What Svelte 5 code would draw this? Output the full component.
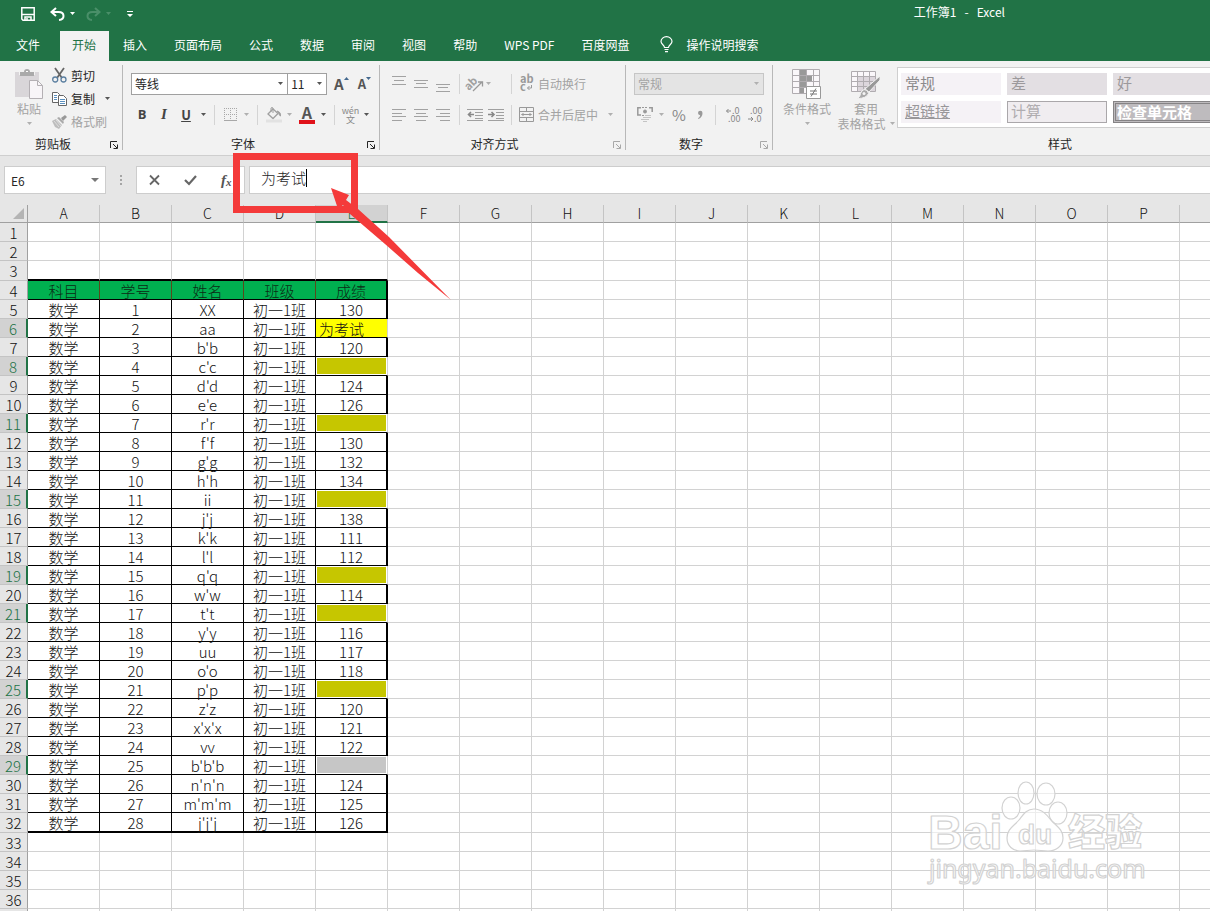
<script>
  const tabs = ['开始', '插入', '页面布局', '公式', '数据', '审阅', '视图', '帮助', 'WPS PDF', '百度网盘'];
  const columns = 'ABCDEFGHIJKLMNOPQ'.split('');
  const headings = ['科目', '学号', '姓名', '班级', '成绩'];
  const names = [
    'XX', 'aa', "b'b", "c'c", "d'd", "e'e", "r'r", "f'f", "g'g", "h'h", 'ii', "j'j", "k'k", "l'l",
    "q'q", "w'w", "t't", "y'y", 'uu', "o'o", "p'p", "z'z", "x'x'x", 'vv', "b'b'b", "n'n'n", "m'm'm", "j'j'j"
  ];
  const scores = [
    '130', '为考试', '120', '', '124', '126', '', '130', '132', '134', '', '138', '111', '112',
    '', '114', '', '116', '117', '118', '', '120', '121', '122', '', '124', '125', '126'
  ];
  const selected = new Set([6, 8, 11, 15, 19, 21, 25, 29]);
  const rows = Array.from({ length: 37 }, (_, i) => i + 1);

  function cellsOf(row) {
    if (row === 4) return headings;
    if (row < 5 || row > 32) return [];
    const i = row - 5;
    return ['数学', String(i + 1), names[i], '初一1班', scores[i]];
  }

  let formula = $state('为考试');
</script>

{#snippet caret(tone)}
  <svg class="caret {tone}" width="5" height="3" viewBox="0 0 5 3" aria-hidden="true"><path d="M0 0h5L2.500 3z" fill="currentColor" /></svg>
{/snippet}

{#snippet lines(ys, kind)}
  <svg width="14" height="16" viewBox="0 0 14 16" aria-hidden="true">
    {#each ys as y, i}
      {@const short = i % 2 === 1}
      {@const x = !short || kind === 'left' ? 0 : kind === 'right' ? 4 : 2}
      <path d="M{x} {y + 0.5}h{short ? 10 : 14}" stroke="#a2a2a2" />
    {/each}
  </svg>
{/snippet}

{#snippet launcher(tone)}
  <button class="launcher {tone}" aria-label="更多选项">
    <svg width="8" height="8" viewBox="0 0 8 8" fill="none" stroke="currentColor"><path d="M.5 7V.5H7M3 3l4 4M7.500 3.500v4h-4" /></svg>
  </button>
{/snippet}

<div class="app">
  <header class="top">
    <div class="title-bar">
      <button class="save" aria-label="保存">
        <svg width="14" height="14" viewBox="0 0 14 14" fill="none" stroke="#fff" stroke-width="1.500"><path d="M.8.8h12.400v12.400H2L.8 12z" /><path d="M1 7.500h12" /><path d="M4 13v-3h6v3" /><path d="M6 11v2" /></svg>
      </button>
      <button aria-label="撤消">
        <svg width="15" height="14" viewBox="0 0 15 14" fill="none" stroke="#fff" stroke-width="2"><path d="M6 1L1.500 5 6 9M2 5h6.500c3 0 5 1.500 5 4s-2 3.800-4.500 4" /></svg>
      </button>
      {@render caret('white')}
      <button class="redo" aria-label="恢复">
        <svg width="15" height="14" viewBox="0 0 15 14" fill="none" stroke="#4a8f69" stroke-width="2"><path d="M9 1l4.500 4L9 9M13 5H6.500c-3 0-5 1.500-5 4s2 3.800 4.500 4" /></svg>
      </button>
      {@render caret('faint')}
      <button class="customize" aria-label="自定义快速访问工具栏">
        <svg width="6" height="6" viewBox="0 0 6 6"><path d="M0 0h6v1H0zM0 3h6L3 6z" fill="#fff" /></svg>
      </button>
      <span class="doc">工作簿1&nbsp;&nbsp; -&nbsp;&nbsp; Excel</span>
    </div>
    <nav class="tabs">
      <button class="file">文件</button>
      {#each tabs as tab, i}
        <button class:active={i === 0}>{tab}</button>
      {/each}
      <button class="tell">
        <svg width="13" height="17" viewBox="0 0 13 17" fill="none" stroke="#fff" stroke-width="1.200"><path d="M4.500 11.500C4.500 9 1 8.500 1 5.500a5.500 4.800 0 0 1 11 0c0 3-3.500 3.500-3.500 6zM4.500 13.500h4M5 15.700h3" /></svg>
        操作说明搜索
      </button>
    </nav>
  </header>

  <section class="ribbon">
    <div class="group clipboard">
      <div class="body">
        <button class="big off paste">
          <svg width="28" height="30" viewBox="0 0 28 30"><path d="M0 3h4v3h16V3h4v25H0z" fill="#d9d6d9" /><path d="M5 3h4q0-3 3-3t3 3h4v4H5z" fill="#aaa" /><path d="M11 2.500h2" stroke="#fff" /><path d="M14.500 11.500h8l5 5v13h-13z" fill="#f8f5f8" stroke="#b4b0b4" /><path d="M22.500 11.500v5h5" fill="none" stroke="#b4b0b4" /></svg>
          <span>粘贴</span>
          {@render caret('off')}
        </button>
        <div class="stack">
          <button>
            <svg width="15" height="15" viewBox="0 0 15 15" fill="none"><path d="M3 0l7 10M12 0L5 10" stroke="#666" stroke-width="1.800" /><circle cx="3.200" cy="11.500" r="2.500" stroke="#5b7fa0" stroke-width="1.300" /><circle cx="11.500" cy="11.500" r="2.500" stroke="#5b7fa0" stroke-width="1.300" /></svg>
            剪切
          </button>
          <button>
            <svg width="15" height="14" viewBox="0 0 15 14" fill="#fff" stroke="#666"><path d="M.5.5h5l2 2v8h-7z" /><path d="M6.500 3.500h5l3 3v7h-8z" /><path d="M2 3.500h3M2 5.500h3M2 7.500h3M8 7.500h5M8 9.500h5M8 11.500h5" stroke="#5b8fbe" /></svg>
            复制
            {@render caret('dark')}
          </button>
          <button class="off">
            <svg width="15" height="14" viewBox="0 0 15 14"><path d="M9 3l4-3 2 2-4 4z" fill="#999" /><path d="M5 3l2-1 5 5-1 2z" fill="#aaa" /><path d="M0 6l4-2 6 6-3 4-2-1-2-1z" fill="#bdbdbd" /><path d="M2 6l5 6M4 5l5 6" stroke="#ddd" /></svg>
            格式刷
          </button>
        </div>
      </div>
      <div class="foot"><span>剪贴板</span>{@render launcher('dark')}</div>
    </div>
    <div class="vr"></div>

    <div class="group font">
      <div class="body two-rows">
        <div class="font-top">
          <label class="pick family"><select aria-label="字体"><option>等线</option></select>{@render caret('dark')}</label>
          <label class="pick size"><select aria-label="字号"><option>11</option></select>{@render caret('dark')}</label>
          <button class="grow" aria-label="增大字号"><b>A</b><svg width="5" height="3" viewBox="0 0 5 3"><path d="M0 3h5L2.500 0z" fill="#44688e" /></svg></button>
          <button class="shrink" aria-label="减小字号"><b>A</b><svg width="5" height="3" viewBox="0 0 5 3"><path d="M0 0h5L2.500 3z" fill="#44688e" /></svg></button>
        </div>
        <div class="font-bottom">
          <button class="glyph"><b>B</b></button>
          <button class="glyph"><i>I</i></button>
          <button class="glyph"><u>U</u></button>
          {@render caret('dark')}
          <span class="sep"></span>
          <button aria-label="边框"><svg width="13" height="13" viewBox="0 0 13 13" fill="none" stroke="#a8a8a8"><path d="M.5 0v12M6.500 0v12M12.500 0v12M0 .5h13M0 6.500h13" stroke-dasharray="1 1" /><path d="M0 12.500h13" /></svg></button>
          {@render caret('off')}
          <span class="sep"></span>
          <button aria-label="填充颜色"><svg width="16" height="16" viewBox="0 0 16 16" fill="none" stroke="#a0a0a0"><path d="M2 7l5-5 5 4.500-5 5z" stroke-width="1.300" /><path d="M5 5V1q1-1 2 0v5" /><path d="M11 4q4 1 3.500 5-2-1-1.500-3z" fill="#a0a0a0" /><path d="M0 12.500h16v3H0z" fill="#e2e2e2" stroke="none" /></svg></button>
          {@render caret('off')}
          <button class="color" aria-label="字体颜色"><b>A</b><span></span></button>
          {@render caret('dark')}
          <span class="sep"></span>
          <button class="pinyin"><span>wén</span><span>文</span></button>
          {@render caret('dark')}
        </div>
      </div>
      <div class="foot"><span>字体</span>{@render launcher('dark')}</div>
    </div>
    <div class="vr"></div>

    <div class="group align">
      <div class="body two-rows">
        <div class="align-row">
          <button aria-label="顶端对齐">{@render lines([0, 4, 8], 'center')}</button>
          <button aria-label="垂直居中">{@render lines([4, 7, 11], 'center')}</button>
          <button aria-label="底端对齐">{@render lines([8, 11, 15], 'center')}</button>
          <span class="sep"></span>
          <button aria-label="方向"><svg width="17" height="16" viewBox="0 0 17 16"><text x="-2" y="10" font-size="11" font-weight="700" fill="#a0a0a0" transform="rotate(-45 6 8)">ab</text><path d="M6 15l9-9M11 6h4.500v4.500" fill="none" stroke="#999" stroke-width="1.300" /></svg></button>
          <span class="start">{@render caret('off')}</span>
          <span class="sep"></span>
          <button class="off wide">
            <svg width="15" height="17" viewBox="0 0 15 17"><text x="1" y="8" font-size="11" font-weight="700" fill="#999">ab</text><text x="1" y="16" font-size="11" font-weight="700" fill="#999">c</text><path d="M12.500 10v3H8.500M10.500 11l-2 2 2 2" fill="none" stroke="#999" /></svg>
            自动换行
          </button>
        </div>
        <div class="align-row">
          <button aria-label="左对齐">{@render lines([2, 6, 9, 13], 'left')}</button>
          <button aria-label="居中">{@render lines([2, 6, 9, 13], 'center')}</button>
          <button aria-label="右对齐">{@render lines([2, 6, 9, 13], 'right')}</button>
          <span class="sep"></span>
          <button aria-label="减少缩进量"><svg width="16" height="14" viewBox="0 0 16 14" fill="none" stroke="#a0a0a0"><path d="M0 1.500h16M8 4.500h8M8 7.500h8M0 12.500h16M8 10.500h8" /><path d="M7 6.500H1.500M4 4L1.500 6.500 4 9" stroke-width="1.600" stroke="#888" /></svg></button>
          <button aria-label="增加缩进量"><svg width="16" height="14" viewBox="0 0 16 14" fill="none" stroke="#a0a0a0"><path d="M0 1.500h16M8 4.500h8M8 7.500h8M0 12.500h16M8 10.500h8" /><path d="M0 6.500h5.500M3.500 4L6 6.500 3.500 9" stroke-width="1.600" stroke="#888" /></svg></button>
          <span class="sep"></span>
          <button class="off wide">
            <svg width="15" height="15" viewBox="0 0 15 15" fill="none" stroke="#999"><path d="M.5.5h14v14H.5zM.5 4.500h14M.5 10.500h14M7.500.5v4M7.500 10.500v4M2.500 7.500h10M4.500 6L3 7.500 4.500 9M10.500 6L12 7.500 10.500 9" /></svg>
            合并后居中
            {@render caret('off')}
          </button>
        </div>
      </div>
      <div class="foot"><span>对齐方式</span>{@render launcher('off')}</div>
    </div>
    <div class="vr"></div>

    <div class="group number">
      <div class="body two-rows">
        <div class="number-top">
          <label class="pick format"><select aria-label="数字格式" disabled><option>常规</option></select>{@render caret('off')}</label>
        </div>
        <div class="number-bottom">
          <button aria-label="会计数字格式"><svg width="16" height="15" viewBox="0 0 16 15" fill="none" stroke="#999"><path d="M4 .8H.8V8H4M12 .8h3.200V5" stroke-width="1.500" /><path d="M5 .5h6M5 8.500h2" stroke-dasharray="2 1" /><circle cx="8" cy="4.500" r="1.500" fill="#999" /><path d="M8 8.500h6M6 10.500h8M4 12.500h8M6 14.500h4" stroke="#c4c4c4" /></svg></button>
          {@render caret('off')}
          <button class="percent">%</button>
          <button aria-label="千位分隔样式"><svg width="5" height="8" viewBox="0 0 5 8"><path d="M0 2a2 2 0 0 1 4.500 0q0 4-4 6l-.5-.8Q2 6 2.200 4.200 0 4 0 2z" fill="#999" /></svg></button>
          <span class="sep"></span>
          <button aria-label="增加小数位数"><svg width="16" height="16" viewBox="0 0 16 16"><text x="7" y="7" font-size="9" fill="#888">.0</text><text x="3" y="15" font-size="9" fill="#888">.00</text><path d="M6 4H1.500M3.500 2l-2 2 2 2" fill="none" stroke="#888" /></svg></button>
          <button aria-label="减少小数位数"><svg width="16" height="16" viewBox="0 0 16 16"><text x="3" y="7" font-size="9" fill="#888">.00</text><text x="7" y="15" font-size="9" fill="#888">.0</text><path d="M1 12h5M4 10l2 2-2 2" fill="none" stroke="#888" /></svg></button>
        </div>
      </div>
      <div class="foot"><span>数字</span>{@render launcher('off')}</div>
    </div>
    <div class="vr"></div>

    <div class="group styles">
      <div class="body">
        <button class="big off cond">
          <svg width="30" height="30" viewBox="0 0 30 30" fill="none"><path d="M.5.500h27v24H.5z" fill="#faf7fa" /><path d="M8 0h7v6h5v6h-5v6h-3v6H8z" fill="#999" /><path d="M.5.500h27v24H.5zM.5 6.500h27M.5 12.500h27M.5 18.500h27M7.500.5v24M14.500.5v24M21.500.5v24" stroke="#b0acb0" /><path d="M14.500 17.500h14v12h-14z" fill="#fff" stroke="#999" /><path d="M18 22h7M18 25h7M24 19.500l-5 8" stroke="#777" /></svg>
          <span>条件格式</span>
          {@render caret('off')}
        </button>
        <button class="big off table-style">
          <svg width="30" height="30" viewBox="0 0 30 30" fill="none"><path d="M.5 2.500h24v20H.5z" fill="#faf7fa" /><path d="M7 8h18v14H7z" fill="#dcd6dc" /><path d="M.5 2.500h24v20H.5zM.5 7.500h24M.5 12.500h24M.5 17.500h24M6.500 2.500v20M12.500 2.500v20M18.500 2.500v20" stroke="#b0acb0" /><path d="M29 7v4L18 23l-4-3z" fill="#999" stroke="#f2f2f2" /><path d="M13 20.500q4 0 4.500 4-2 5-11 5 3-2 3-5 1-3 3.500-4z" fill="#aaa" stroke="#f2f2f2" /><circle cx="13" cy="24.500" r="1.500" fill="#f4f4f4" /></svg>
          <span>套用</span>
          <span class="with-caret">表格格式{@render caret('off')}</span>
        </button>
        <div class="gallery">
          <button class="sw">常规</button>
          <button class="sw bad">差</button>
          <button class="sw bad good">好</button>
          <button class="sw link">超链接</button>
          <button class="sw calc">计算</button>
          <button class="sw check">检查单元格</button>
        </div>
      </div>
      <div class="foot"><span>样式</span></div>
    </div>
  </section>

  <section class="formula-bar">
    <label class="name-box"><input aria-label="名称框" value="E6" /><svg width="8" height="4" viewBox="0 0 8 4"><path d="M0 0h8L4 4z" fill="#777" /></svg></label>
    <svg class="dots" width="2" height="10" viewBox="0 0 2 10"><path d="M0 0h2v2H0zM0 4h2v2H0zM0 8h2v2H0z" fill="#a5a5a5" /></svg>
    <div class="entry">
      <button aria-label="取消"><svg width="11" height="10" viewBox="0 0 11 10"><path d="M1 .5l9 9M10 .5l-9 9" stroke="#666" stroke-width="1.800" /></svg></button>
      <button aria-label="输入"><svg width="13" height="10" viewBox="0 0 13 10"><path d="M1 5l4 4 7-8" fill="none" stroke="#666" stroke-width="2.200" /></svg></button>
      <button class="fx" aria-label="插入函数">f<sub>x</sub></button>
    </div>
    <label class="formula"><input aria-label="编辑栏" bind:value={formula} /><span class="cursor"></span></label>
  </section>

  <main class="sheet">
    <table>
      <thead>
        <tr>
          <th class="corner"><svg width="11" height="11" viewBox="0 0 11 11"><path d="M11 0v11H0z" fill="#b4b4b4" /></svg></th>
          {#each columns as letter}
            <th class:picked={letter === 'E'}>{letter}</th>
          {/each}
        </tr>
      </thead>
      <tbody>
        {#each rows as row}
          {@const cells = cellsOf(row)}
          <tr
            class:before={row === 3}
            class:head={row === 4}
            class:data={row > 4 && row < 33}
            class:last={row === 32}
          >
            <th class:picked={selected.has(row)}>{row}</th>
            {#each columns as letter, i}
              <td
                class:used={i < 5}
                class:edge={i === 4}
                class:editing={i === 4 && row === 6}
                class:chosen={i === 4 && row > 6 && selected.has(row)}
                class:active={i === 4 && row === 29}>{cells[i] ?? ''}</td>
            {/each}
          </tr>
        {/each}
      </tbody>
    </table>
  </main>

  <svg class="callout" width="224" height="150" viewBox="0 0 224 150" aria-hidden="true">
    <path d="M6.500 3.500h118v53H6.500z" fill="none" stroke="#f43a3a" stroke-width="7" />
    <path d="M101 35l18 7-3 5 12 9 31 28 62 63-33-27-33-29-35-30-7-9-5 4z" fill="#f43a3a" />
  </svg>

  <svg class="watermark" width="240" height="115" viewBox="0 0 240 115">
    <g fill="#fff" fill-opacity=".6" stroke="#d2d2d2" stroke-width="1.200" stroke-linejoin="round">
      <ellipse cx="91" cy="33" rx="9" ry="11" />
      <ellipse cx="106" cy="18" rx="8" ry="11" />
      <ellipse cx="126" cy="19" rx="9" ry="11" />
      <ellipse cx="138" cy="38" rx="9" ry="11" />
      <path d="M114 34c-8 0-11 6-15 11-5 6-12 9-12 18 0 8 6 13 13 13 5 0 9-1 14-1s9 1 14 1c8 0 15-5 15-13 0-9-7-12-12-18-4-5-9-11-17-11z" />
      <text x="8" y="74" font-size="48" font-weight="700">Bai</text>
      <text x="98" y="69" font-size="28" font-weight="700">du</text>
      <text class="cn" x="148" y="71" font-size="37" font-weight="900">经验</text>
      <text class="site" x="9" y="103" font-size="25">jingyan.baidu.com</text>
    </g>
  </svg>
</div>

<style>
  :global(body) { overflow: hidden; }
  .app {
    position: relative;
    display: flex;
    flex-direction: column;
    height: 100vh;
    overflow: hidden;
    background: #fff;
    color: #262626;
    font: 12px/15px "Noto Sans CJK SC", sans-serif;
  }
  button, select, input { font: inherit; color: inherit; background: none; border: 0; padding: 0; margin: 0; }
  button { display: flex; align-items: center; justify-content: center; white-space: nowrap; }
  input { min-width: 0; outline: 0; }
  svg { display: block; flex: none; overflow: visible; }
  .caret.dark { color: #555; }
  .caret.off { color: #b0b0b0; }
  .caret.white { color: #fff; }
  .caret.faint { color: #4a8f69; }

  .top { background: #217346; color: #fff; }
  .title-bar { display: flex; align-items: center; height: 27px; padding: 0 205px 4px 21px; }
  .save { margin-right: 15px; }
  .title-bar .caret { margin-left: 5px; }
  .redo { margin-left: 11px; }
  .customize { margin-left: 16px; }
  .doc { margin-left: auto; padding-bottom: 5px; }
  .tabs { display: flex; height: 30px; }
  .tabs button { padding: 0 13px 4px 14px; }
  .tabs .file { padding: 0 20px 4px 16px; }
  .tabs .active { background: #f2f2f2; color: #217346; padding: 0 13px 4px 12px; }
  .tabs .tell { gap: 13px; padding: 0 14px 3px 18px; }

  .ribbon { display: flex; height: 94px; background: #f2f2f2; border-bottom: 1px solid #cfcfcf; overflow: hidden; }
  .group { display: flex; flex-direction: column; flex: none; }
  .vr { flex: none; width: 1px; margin: 4px 0 5px; background: #b8b8b8; }
  .sep { width: 1px; height: 20px; background: #d4d4d4; }
  .body { display: flex; height: 72px; }
  .foot { display: grid; grid-template-columns: 1fr auto; align-items: center; height: 20px; text-align: center; }
  .launcher { width: 16px; height: 16px; margin-top: 4px; }
  .launcher.off { color: #a8a8a8; }
  .off { color: #a3a3a3; }
  .clipboard { width: 122px; }
  .font { width: 256px; }
  .align { width: 245px; }
  .number { width: 146px; }
  .styles { flex: 1 0 0; min-width: 0; }
  .styles .foot { padding-left: 275px; text-align: left; }

  .big { flex-direction: column; justify-content: flex-start; padding-top: 8px; }
  .big > span { line-height: 15px; }
  .big > svg + span { margin-top: 2px; }
  .big > .caret { margin-top: 6px; }
  .paste { width: 44px; margin-left: 7px; }
  .stack { display: flex; flex-direction: column; padding-top: 3px; margin-left: 1px; }
  .stack button { justify-content: flex-start; gap: 4px; height: 23px; }
  .stack .caret { margin-left: 6px; }

  .two-rows { flex-direction: column; padding: 7px 8px 0; box-sizing: border-box; }
  .two-rows > div { height: 31px; align-items: center; }
  .font-top { display: flex; }
  .pick { display: flex; align-items: center; height: 22px; box-sizing: border-box; padding: 0 4px 0 3px; border: 1px solid #a0a0a0; background: #fff; }
  .pick select { flex: 1; min-width: 0; appearance: none; outline: 0; line-height: 18px; }
  .family { width: 158px; }
  .size { width: 40px; margin-left: -1px; }
  .format { width: 131px; background: #e4e4e4; border-color: #c6c6c6; }
  .format select { color: #a3a3a3; opacity: 1; }
  .grow, .shrink { align-items: flex-start; color: #555; }
  .grow { margin-left: 7px; font-size: 15px; }
  .shrink { margin-left: 9px; font-size: 13px; }
  .grow svg, .shrink svg { margin-top: 1px; }
  .font-bottom {
    display: grid;
    grid-template-columns: 22px 22px 22px 12px 10px 22px 10px 12px 22px 8px 28px 5px 16px 17px 14px;
    justify-items: center;
  }
  .glyph { font-size: 13px; color: #444; }
  .glyph b { font-family: "Open Sans", sans-serif; }
  .glyph i { font-family: "Liberation Serif", serif; font-weight: 700; font-size: 15px; }
  .glyph u { font-weight: 700; }
  .color { flex-direction: column; color: #555; font-size: 16px; line-height: 13px; }
  .color span { width: 16px; height: 4px; margin-top: 1px; background: #e0121a; }
  .pinyin { flex-direction: column; color: #888; font-size: 9px; line-height: 9px; }

  .align-row { display: grid; grid-template-columns: 22px 22px 22px 10px 22px 20px 11px auto; justify-items: center; justify-content: start; }
  .start { justify-self: start; }
  .align-row .wide { justify-self: start; gap: 4px; margin-left: 2px; }
  .wide .caret { margin-left: 6px; }
  .number-top { display: flex; }
  .number-bottom { display: grid; grid-template-columns: 22px 10px 26px 16px 14px 22px 22px; justify-items: center; }
  .percent { color: #888; font-size: 15px; }

  .cond { width: 54px; margin-left: 7px; }
  .table-style { width: 62px; margin-left: 1px; }
  .with-caret { display: flex; align-items: center; gap: 4px; }
  .gallery {
    flex: 1 0 0;
    min-width: 0;
    display: grid;
    grid-template-columns: 100px 100px 100px;
    grid-template-rows: 22px 22px;
    gap: 6px;
    height: 61px;
    box-sizing: border-box;
    margin: 6px 0 0;
    padding: 5px 3px;
    border: 1px solid #cfcfcf;
    border-right: 0;
    background: #fff;
    overflow: hidden;
  }
  .sw { justify-content: flex-start; padding: 0 0 3px 4px; background: #f5f2f6; color: #8c8a8c; font-size: 15px; box-sizing: border-box; }
  .bad { background: #e3dfe3; color: #9c999c; }
  .link { color: #99979a; text-decoration: underline; }
  .calc { background: #f0edf0; color: #b0adb0; border: 1px solid #aaa7aa; padding-left: 3px; }
  .check { background: #bebbbe; color: #fff; font-weight: 700; border: 3px double #858385; padding: 0 0 1px 1px; }

  .formula-bar { display: flex; align-items: center; height: 28px; padding: 10px 0 11px 4px; background: #e6e6e6; }
  .name-box, .entry, .formula { display: flex; align-items: center; height: 28px; box-sizing: border-box; background: #fff; border: 1px solid #cdcdcd; }
  .name-box { width: 102px; padding: 0 6px; }
  .name-box input { flex: 1; }
  .dots { margin: 0 14px; }
  .entry { width: 109px; }
  .entry button { width: 36px; }
  .fx { color: #555; font: italic 700 15px/18px "Liberation Serif", serif; }
  .fx sub { font-size: 11px; line-height: 8px; padding-top: 4px; }
  .formula { flex: 1; margin-left: 4px; padding: 0 0 5px 11px; border-right: 0; }
  .formula input { width: 45px; font-size: 15px; line-height: 20px; font-weight: 300; }
  .cursor { width: 1px; height: 18px; background: #000; }

  .sheet { flex: 1; min-height: 0; overflow: hidden; background: #fff; }
  table { border-collapse: separate; border-spacing: 0; table-layout: fixed; width: 1252px; font-size: 15px; line-height: 17px; }
  tbody tr { height: 19px; }
  th, td { box-sizing: border-box; width: 72px; height: 19px; padding: 0; text-align: center; font-weight: 300; white-space: nowrap; border: solid #d2d2d2; border-width: 0 1px 1px 0; }
  th { background: #e6e6e6; color: #111; border-color: #c4c4c4; }
  td { color: #111; }
  thead th { height: 18px; line-height: 17px; border-bottom-color: #a0a0a0; font-size: 14px; }
  .corner, tbody th { width: 28px; border-right-color: #a0a0a0; }
  .corner svg { margin-left: 13px; }
  th.picked { background: #d2d2d2; color: #217346; }
  thead th.picked { border-bottom: 2px solid #217346; line-height: 16px; }
  tbody th.picked { border-right: 2px solid #217346; }
  .before th, .before td, .last th, .last td { height: 20px; }
  .before .used { border-bottom: 2px solid #000; }
  .head .used { background: #00b050; color: #0c2a14; border-color: #5b4a1c; border-bottom-color: #000; }
  .data .used { border-color: #000; }
  .head .edge, .data .edge { border-right: 2px solid #000; }
  .data .editing { background: #ff0; text-align: left; padding-left: 3px; border-right: 1px solid #d2d2d2; }
  .data .chosen { background: #c6c600; border-right: 1px solid #d2d2d2; box-shadow: inset 0 0 0 1px #fff; }
  .data .active { background: #c6c6c6; }
  .last .used { border-bottom: 2px solid #000; }

  .callout { position: absolute; left: 230px; top: 153px; pointer-events: none; }
  .watermark { position: absolute; right: 50px; bottom: 21px; pointer-events: none; font-family: "Liberation Sans", sans-serif; }
  .cn { font-family: "Noto Sans CJK SC", sans-serif; }
  .site { font-family: "Noto Sans", sans-serif; }
</style>
